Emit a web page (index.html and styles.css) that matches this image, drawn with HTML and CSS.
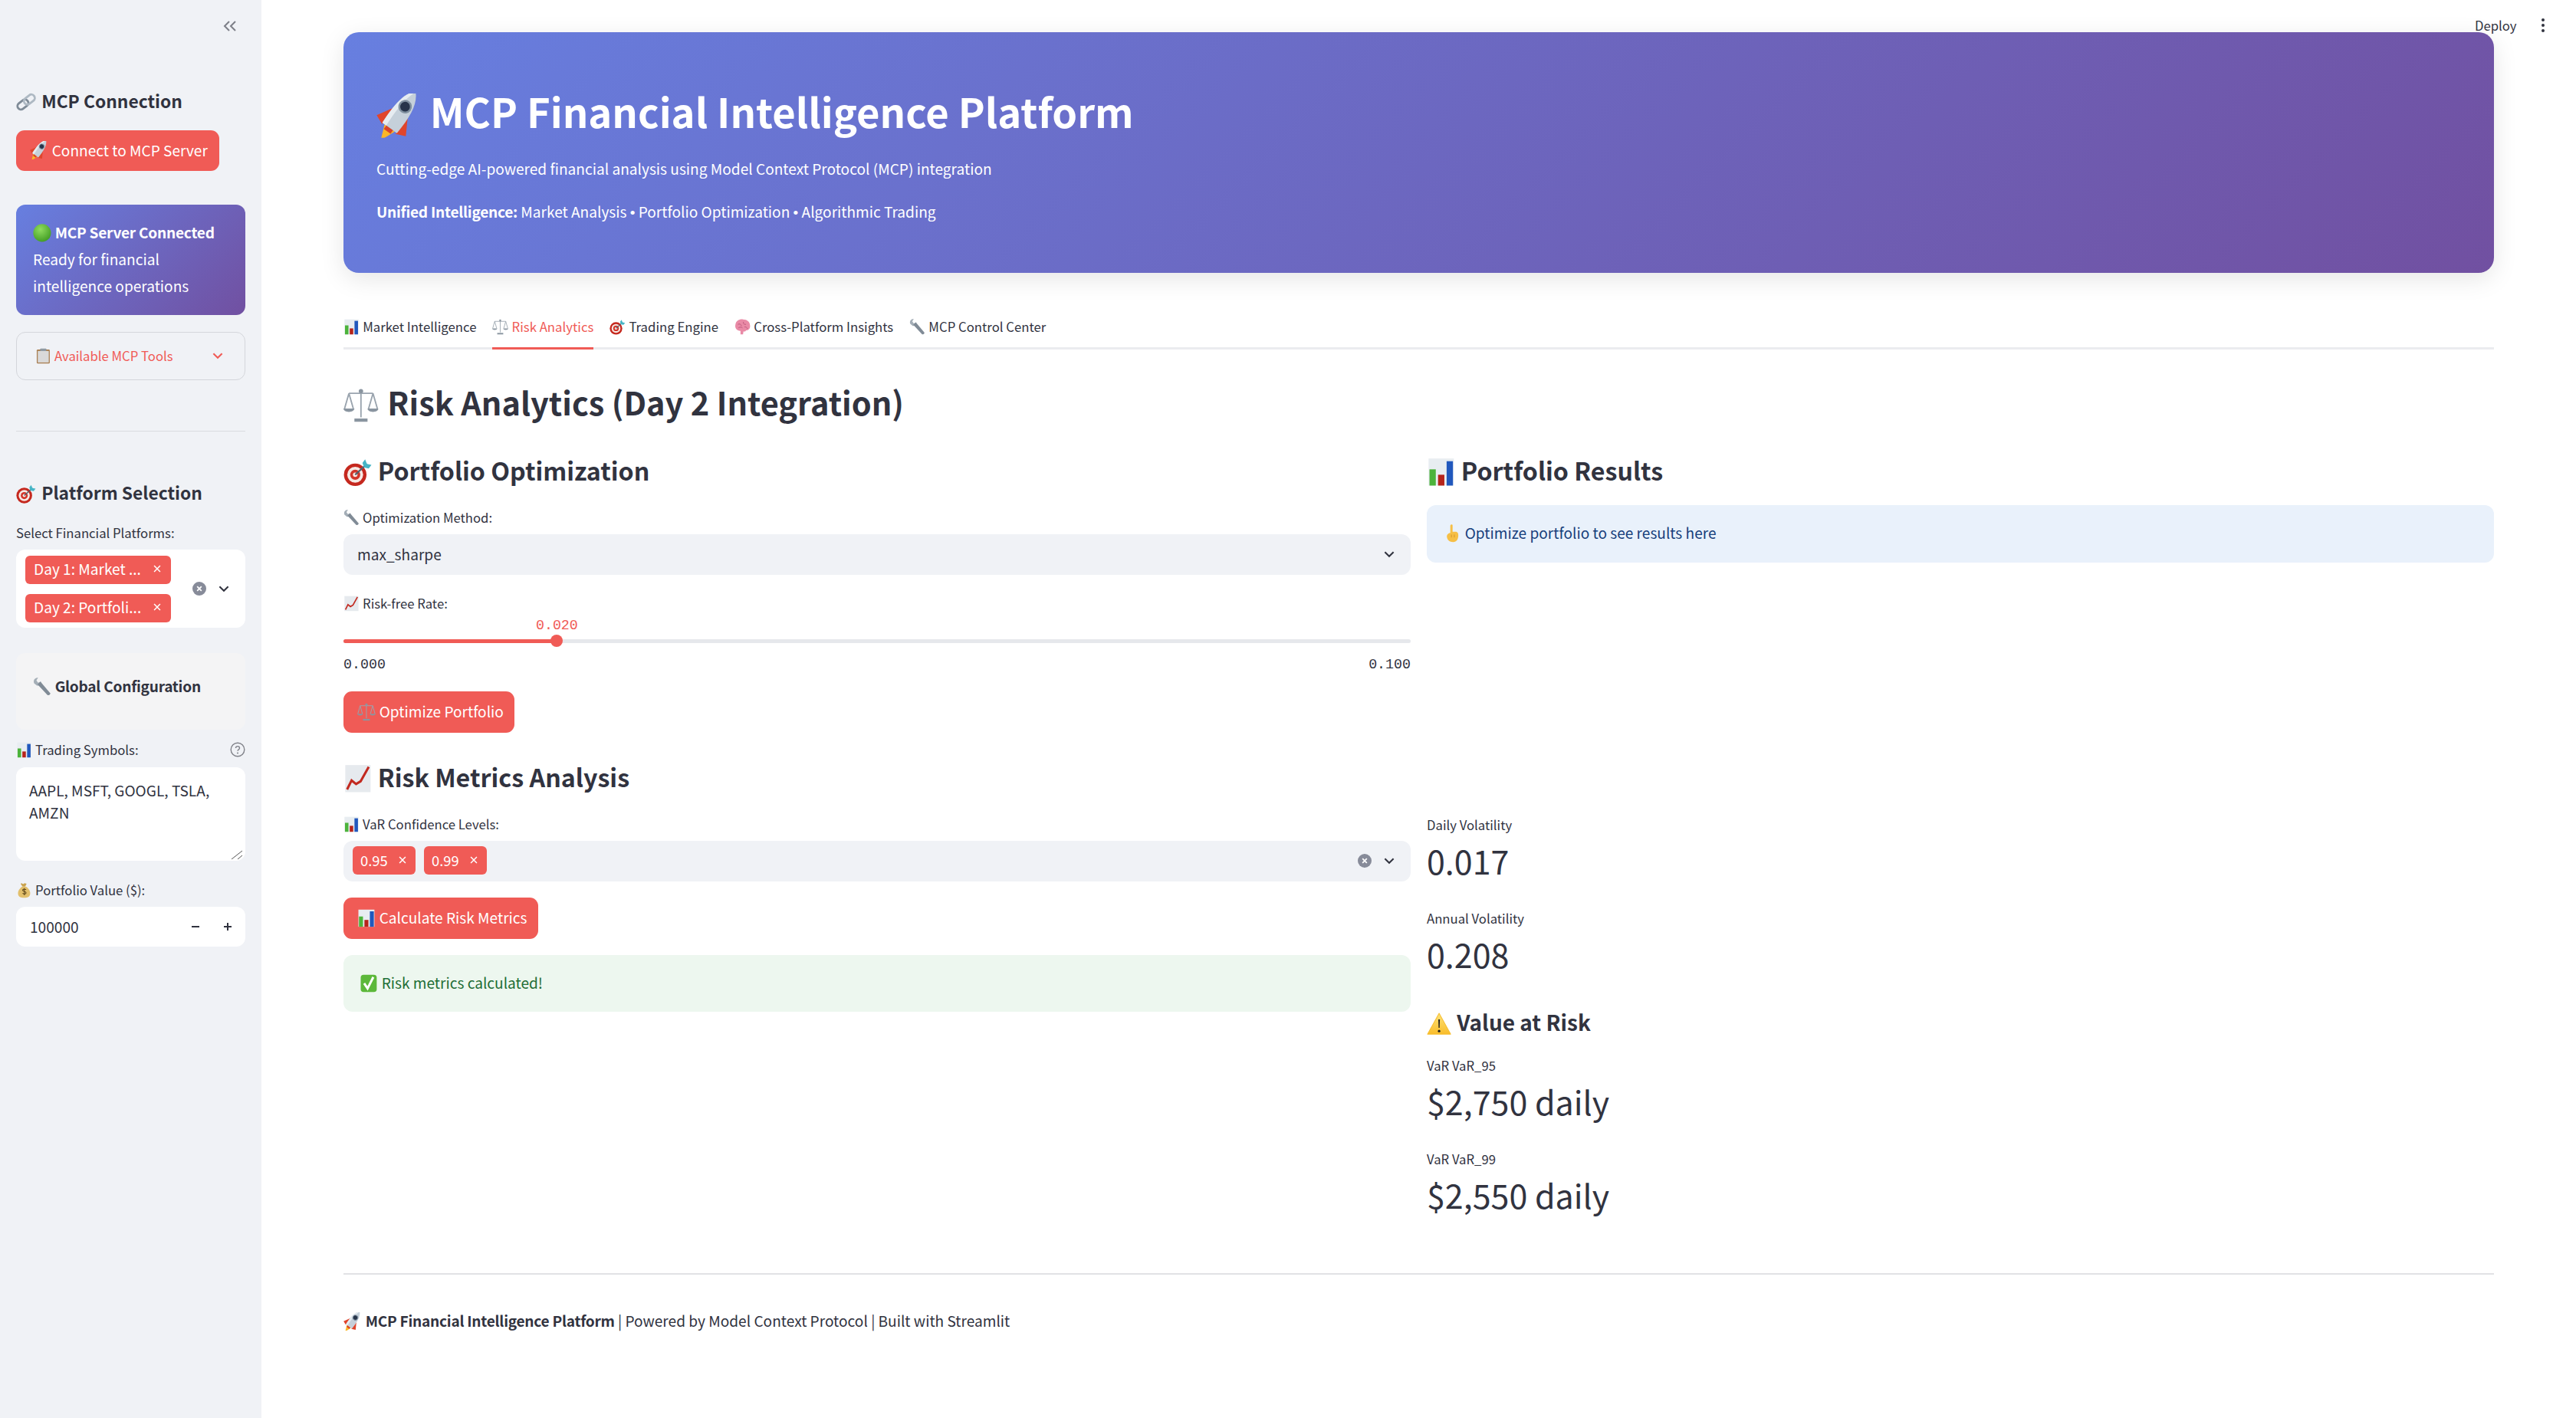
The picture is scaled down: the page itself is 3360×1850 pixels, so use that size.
FILE: index.html

```html
<!DOCTYPE html>
<html lang="en">
<head>
  <meta charset="UTF-8">
  <title>MCP Financial Intelligence Platform</title>
  <link rel="stylesheet" href="styles.css">
</head>
<body>
  <svg class="defs" aria-hidden="true">
    <defs>
      <radialGradient id="g-green" cx="40%" cy="30%" r="75%"><stop offset="0" stop-color="#8fdc5e"/><stop offset="1" stop-color="#3f9a22"/></radialGradient>
      <linearGradient id="g-warn" x1="0" y1="0" x2="0" y2="1"><stop offset="0" stop-color="#fde37a"/><stop offset="1" stop-color="#f9bd2b"/></linearGradient>
    </defs>
    <symbol id="e-rocket" viewBox="0 0 32 32">
      <g transform="rotate(36 16 16)">
        <path d="M11.500 27h9L16 38z" fill="#fbb728"/>
        <path d="M10 13L3 25l7 3zM22 13l7 12-7 3z" fill="#e0452c"/>
        <path d="M16-5c6 6 7.500 16 6.500 32h-13C8.500 11 10-1 16-5z" fill="#c5d0da"/>
        <path d="M16-5c-6 4-7.500 16-6.500 32H13C12 12 13 2 16-5z" fill="#e6ecf1"/>
        <circle cx="16" cy="8" r="4.200" fill="#27344a" stroke="#7f8f9f" stroke-width="1.400"/>
        <path d="M13 27h6v3h-6z" fill="#d8442b"/>
      </g>
    </symbol>
    <symbol id="e-link" viewBox="0 0 32 32">
      <g fill="none" stroke="#7f8b97" stroke-width="3.500" transform="rotate(-38 16 16)">
        <rect x="0" y="10.500" width="19" height="11" rx="5.500"/>
        <rect x="13" y="10.500" width="19" height="11" rx="5.500" stroke="#aeb9c3"/>
      </g>
    </symbol>
    <symbol id="e-green" viewBox="0 0 32 32"><circle cx="16" cy="16" r="15.500" fill="url(#g-green)"/></symbol>
    <symbol id="e-clip" viewBox="0 0 32 32">
      <rect x="3" y="3" width="26" height="28" rx="2" fill="#a97f52"/>
      <rect x="5" y="6" width="22" height="23" fill="#d9d9d9"/>
      <rect x="10" y="1" width="12" height="5" rx="1" fill="#8f9aa3"/>
    </symbol>
    <symbol id="e-target" viewBox="0 0 32 32">
      <circle cx="13" cy="19" r="12.500" fill="#c5281e"/>
      <circle cx="13" cy="19" r="8.800" fill="#f6e9e4"/>
      <circle cx="13" cy="19" r="5.600" fill="#d2352a"/>
      <circle cx="13" cy="19" r="2.500" fill="#f6e9e4"/>
      <path d="M13 19L26 7" stroke="#55626d" stroke-width="1.800"/>
      <path d="M24 2l2 5 5 1-3 4-5-1-2-5z" fill="#46b5c6"/>
    </symbol>
    <symbol id="e-wrench" viewBox="0 0 32 32">
      <path d="M2 10C0 5 3 0 9 0L6 5l3 4 5-2c1 5-3 8-7 7z" fill="#a4aeb7"/>
      <path d="M8 12l5-5 17 20c1 3-3 5-5 3z" fill="#808b96"/>
    </symbol>
    <symbol id="e-bars" viewBox="0 0 32 32">
      <rect x="2" y="1" width="28" height="30" fill="#e8edf1"/>
      <rect x="3" y="13" width="7" height="18" fill="#4cb33b"/>
      <rect x="12.500" y="19" width="7" height="12" fill="#b6241b"/>
      <rect x="22" y="4" width="7" height="27" fill="#2158bd"/>
    </symbol>
    <symbol id="e-chart" viewBox="0 0 32 32">
      <rect x="2" y="1" width="28" height="30" fill="#e6eaee"/>
      <path d="M4 28l5-10 5 4 5-3 9-16" fill="none" stroke="#c22a20" stroke-width="2.600"/>
    </symbol>
    <symbol id="e-scales" viewBox="0 0 32 32">
      <g fill="none" stroke="#9aa4ae" stroke-width="1.300">
        <path d="M16 2v25M5 5h22M5 5l-4 14M5 5l4 14M27 5l-4 14M27 5l4 14"/>
      </g>
      <path d="M0 19h10c0 4-10 4-10 0zM22 19h10c0 4-10 4-10 0z" fill="#8a95a0"/>
      <path d="M10 28h12v3H10z" fill="#8a95a0"/>
      <circle cx="16" cy="3" r="2" fill="#8a95a0"/>
    </symbol>
    <symbol id="e-brain" viewBox="0 0 32 32">
      <path d="M2 11C3 4 10 0 17 1c8 0 14 5 14 12 1 5-2 10-8 10-1 2-3 3-5 2l-1 6h-5v-7C5 24 0 18 2 11z" fill="#e98aa6"/>
      <path d="M7 11c3-2 6 0 7 3M18 6c-1 3 1 6 5 5M8 18c3-2 6-2 8 0M20 16c3 0 5 1 6 4" fill="none" stroke="#b9557a" stroke-width="1.400"/>
    </symbol>
    <symbol id="e-check" viewBox="0 0 32 32">
      <rect x="2" y="1" width="28" height="30" rx="5" fill="#5cb83a"/>
      <path d="M8 16l6 9L24 5" fill="none" stroke="#fff" stroke-width="4"/>
    </symbol>
    <symbol id="e-point" viewBox="0 0 32 32">
      <path d="M13 2c1-2 4-2 4 0v11h5c4 0 5 3 5 6 0 7-3 12-9 12s-10-3-11-9c0-3 1-6 6-7z" fill="#f6bf45"/>
      <path d="M15 18v5M20 18v5" stroke="#d2922a" stroke-width="1.200"/>
    </symbol>
    <symbol id="e-warn" viewBox="0 0 32 32">
      <path d="M16 2L31 29H1z" fill="url(#g-warn)" stroke="#f7bd2e" stroke-linejoin="round"/>
      <path d="M15 10h2l-.4 11h-1.200z" fill="#1c1c1c"/>
      <circle cx="16" cy="25" r="1.600" fill="#1c1c1c"/>
    </symbol>
    <symbol id="e-bag" viewBox="0 0 32 32">
      <path d="M11 2l3 2 3-2 4 1-3 6h-5l-4-6z" fill="#c9a24d"/>
      <path d="M12 9h8c6 4 9 10 8 15-1 5-5 7-12 7S5 29 4 24c-1-5 2-11 8-15z" fill="#e2bf6b"/>
      <path d="M20 15c-3-2-7-1-7 1s7 2 7 5-5 3-7 1M16.500 12v14" fill="none" stroke="#5c4418" stroke-width="1.600"/>
    </symbol>
    <symbol id="i-chev" viewBox="0 0 16 16"><path d="M3 5.500l5 5 5-5" fill="none" stroke="currentColor" stroke-width="1.800"/></symbol>
    <symbol id="i-x" viewBox="0 0 16 16"><path d="M3.500 3.500l9 9M12.500 3.500l-9 9" fill="none" stroke="currentColor" stroke-width="1.700"/></symbol>
    <symbol id="i-clear" viewBox="0 0 16 16"><circle cx="8" cy="8" r="8" fill="#878b99"/><path d="M5.500 5.500l5 5M10.500 5.500l-5 5" stroke="#fff" stroke-width="1.600"/></symbol>
  </svg>

  <div class="top-actions">
    <span>Deploy</span>
    <span class="dots"><i></i><i></i><i></i></span>
  </div>

  <div class="app">
    <aside class="sidebar">
      <div class="collapse">
        <svg viewBox="0 0 18 14" class="collapse-icon"><path d="M8 1L2 7l6 6M16 1l-6 6 6 6" fill="none" stroke="currentColor" stroke-width="2"/></svg>
      </div>

      <h3 class="side-head first"><svg class="emoji"><use href="#e-link"/></svg>MCP Connection</h3>
      <button class="btn connect"><svg class="emoji"><use href="#e-rocket"/></svg>Connect to MCP Server</button>

      <div class="status-card">
        <div><svg class="emoji"><use href="#e-green"/></svg><b>MCP Server Connected</b></div>
        <div>Ready for financial</div>
        <div>intelligence operations</div>
      </div>

      <div class="expander">
        <span><svg class="emoji"><use href="#e-clip"/></svg>Available MCP Tools</span>
        <svg class="chev"><use href="#i-chev"/></svg>
      </div>

      <hr class="side-rule">

      <h3 class="side-head second"><svg class="emoji"><use href="#e-target"/></svg>Platform Selection</h3>
      <label class="field-label select-label">Select Financial Platforms:</label>
      <div class="side-multi">
        <div class="side-tags">
          <span class="tag wide"><span>Day 1: Market ...</span><svg class="tag-x"><use href="#i-x"/></svg></span>
          <span class="tag wide"><span>Day 2: Portfoli...</span><svg class="tag-x"><use href="#i-x"/></svg></span>
        </div>
        <svg class="clear"><use href="#i-clear"/></svg>
        <svg class="chev dark"><use href="#i-chev"/></svg>
      </div>

      <div class="config-box"><svg class="emoji"><use href="#e-wrench"/></svg><b>Global Configuration</b></div>

      <label class="field-label symbols-label">
        <span><svg class="emoji"><use href="#e-bars"/></svg>Trading Symbols:</span>
        <svg class="help" viewBox="0 0 20 20"><circle cx="10" cy="10" r="8.800" fill="none" stroke="currentColor" stroke-width="1.400"/><path d="M7.500 8c0-3.200 5-3.200 5 0 0 2-2.500 1.800-2.500 3.800" fill="none" stroke="currentColor" stroke-width="1.400"/><circle cx="10" cy="14.500" r="1" fill="currentColor"/></svg>
      </label>
      <div class="textarea">AAPL, MSFT, GOOGL, TSLA, AMZN
        <svg class="grip" viewBox="0 0 16 12"><path d="M1 12L15 1M9 12l6-5" stroke="#555" fill="none"/></svg>
      </div>

      <label class="field-label value-label"><svg class="emoji"><use href="#e-bag"/></svg>Portfolio Value ($):</label>
      <div class="number-input">
        <span class="number-text">100000</span>
        <span class="step minus"></span>
        <span class="step plus"></span>
      </div>
    </aside>

    <main class="main">
      <section class="hero">
        <h1><svg class="emoji"><use href="#e-rocket"/></svg>MCP Financial Intelligence Platform</h1>
        <p class="hero-sub">Cutting-edge AI-powered financial analysis using Model Context Protocol (MCP) integration</p>
        <p class="hero-line"><b>Unified Intelligence:</b> Market Analysis <span class="sep">•</span> Portfolio Optimization <span class="sep">•</span> Algorithmic Trading</p>
      </section>

      <nav class="tabs">
        <span class="tab"><svg class="emoji"><use href="#e-bars"/></svg>Market Intelligence</span>
        <span class="tab active"><svg class="emoji"><use href="#e-scales"/></svg>Risk Analytics</span>
        <span class="tab"><svg class="emoji"><use href="#e-target"/></svg>Trading Engine</span>
        <span class="tab"><svg class="emoji"><use href="#e-brain"/></svg>Cross-Platform Insights</span>
        <span class="tab"><svg class="emoji"><use href="#e-wrench"/></svg>MCP Control Center</span>
      </nav>

      <h2 class="page-title"><svg class="emoji"><use href="#e-scales"/></svg>Risk Analytics (Day 2 Integration)</h2>

      <div class="columns">
        <div class="col">
          <h3 class="section-title"><svg class="emoji"><use href="#e-target"/></svg>Portfolio Optimization</h3>
          <label class="field-label main-label"><svg class="emoji"><use href="#e-wrench"/></svg>Optimization Method:</label>
          <div class="select">
            <span>max_sharpe</span>
            <svg class="chev dark"><use href="#i-chev"/></svg>
          </div>

          <label class="field-label rate-label"><svg class="emoji"><use href="#e-chart"/></svg>Risk-free Rate:</label>
          <div class="slider">
            <div class="slider-value"><span style="left: 20%">0.020</span></div>
            <div class="track">
              <div class="fill" style="width: 20%"></div>
              <div class="thumb" style="left: 20%"></div>
            </div>
            <div class="ticks"><span>0.000</span><span>0.100</span></div>
          </div>
          <button class="btn optimize"><svg class="emoji"><use href="#e-scales"/></svg>Optimize Portfolio</button>

          <h3 class="section-title metrics-title"><svg class="emoji"><use href="#e-chart"/></svg>Risk Metrics Analysis</h3>
          <label class="field-label main-label"><svg class="emoji"><use href="#e-bars"/></svg>VaR Confidence Levels:</label>
          <div class="select multi">
            <div class="tag-row">
              <span class="tag"><span>0.95</span><svg class="tag-x"><use href="#i-x"/></svg></span>
              <span class="tag"><span>0.99</span><svg class="tag-x"><use href="#i-x"/></svg></span>
            </div>
            <svg class="clear"><use href="#i-clear"/></svg>
            <svg class="chev dark"><use href="#i-chev"/></svg>
          </div>
          <button class="btn calculate"><svg class="emoji"><use href="#e-bars"/></svg>Calculate Risk Metrics</button>
          <div class="alert success"><svg class="emoji"><use href="#e-check"/></svg>Risk metrics calculated!</div>
        </div>

        <div class="col">
          <h3 class="section-title"><svg class="emoji"><use href="#e-bars"/></svg>Portfolio Results</h3>
          <div class="alert info"><svg class="emoji"><use href="#e-point"/></svg>Optimize portfolio to see results here</div>

          <div class="metric first-metric">
            <div class="metric-label">Daily Volatility</div>
            <div class="metric-value">0.017</div>
          </div>
          <div class="metric">
            <div class="metric-label">Annual Volatility</div>
            <div class="metric-value">0.208</div>
          </div>

          <h4 class="sub-title"><svg class="emoji"><use href="#e-warn"/></svg>Value at Risk</h4>
          <div class="metric var-metric">
            <div class="metric-label">VaR VaR_95</div>
            <div class="metric-value">$2,750 daily</div>
          </div>
          <div class="metric">
            <div class="metric-label">VaR VaR_99</div>
            <div class="metric-value">$2,550 daily</div>
          </div>
        </div>
      </div>

      <hr class="foot-rule">
      <p class="footer"><svg class="emoji"><use href="#e-rocket"/></svg><b>MCP Financial Intelligence Platform</b> | Powered by Model Context Protocol | Built with Streamlit</p>
    </main>
  </div>
</body>
</html>
```

FILE: styles.css

```css
* {
  box-sizing: border-box;
}
html, body {
  margin: 0;
  height: 100%;
}
body {
  font-family: "Noto Sans CJK SC", "Noto Sans", sans-serif;
  color: #31333f;
  background: #fff;
  overflow: hidden;
}
.defs {
  position: absolute;
  width: 0;
  height: 0;
}
b {
  font-weight: 700;
  letter-spacing: -0.013em;
}
h1, h2, h3, h4 {
  font-weight: 700;
}
h1, h2, h3, h4, p {
  margin: 0;
}
.emoji {
  width: 1.25em;
  height: 1.25em;
  vertical-align: 0.16em;
  margin: -0.4em 0.25em -0.4em 0;
  overflow: visible;
}
.app {
  display: flex;
  height: 1850px;
}

/* top right */
.top-actions {
  position: absolute;
  top: 20px;
  left: 3228px;
  z-index: 5;
  display: flex;
  align-items: center;
  gap: 32px;
  font-size: 16.7px;
  line-height: 26px;
}
.dots {
  display: flex;
  flex-direction: column;
  gap: 3px;
}
.dots i {
  width: 4px;
  height: 4px;
  border-radius: 50%;
  background: #31333f;
}

/* sidebar */
.sidebar {
  width: 341px;
  flex: none;
  background: #f0f2f6;
  padding: 27px 21px 0;
}
.collapse {
  display: flex;
  justify-content: flex-end;
  padding-right: 11px;
  height: 14px;
  color: #7d7f88;
}
.collapse-icon {
  width: 18px;
  height: 14px;
}
.side-head {
  font-size: 22.8px;
  line-height: 36px;
  white-space: nowrap;
}
.side-head .emoji {
  width: 1.15em;
  height: 1.15em;
  margin-right: 7px;
}
.side-head.first {
  margin-top: 73px;
}
.side-head.second {
  margin-top: 62px;
}
.btn {
  display: block;
  border: none;
  background: #f05b56;
  color: #fff;
  font-family: inherit;
  font-size: 19.1px;
  line-height: 30px;
  border-radius: 11px;
  white-space: nowrap;
  padding: 0 18px 2px;
  height: 54px;
  text-align: left;
}
.connect {
  margin-top: 20px;
  width: 265px;
  height: 53px;
}
.status-card {
  margin-top: 44px;
  height: 144px;
  border-radius: 12px;
  padding: 19px 10px 0 22px;
  color: #fff;
  font-size: 19.1px;
  line-height: 35px;
  background: linear-gradient(135deg, #677fe0, #7150a1);
}
.expander {
  margin-top: 22px;
  height: 63px;
  border: 1px solid #d4d6db;
  border-radius: 12px;
  display: flex;
  align-items: center;
  justify-content: space-between;
  padding: 0 26px 2px 24px;
  color: #f05b56;
  font-size: 16.7px;
}
.chev {
  width: 18px;
  height: 18px;
  flex: none;
}
.chev.dark {
  color: #31333f;
}
.side-rule {
  margin: 66px 0 0;
  border: none;
  border-top: 1px solid #d9dbe0;
}
.field-label {
  display: block;
  font-size: 16.7px;
  line-height: 24px;
}
.select-label {
  margin-top: 22px;
}
.side-multi {
  margin-top: 10px;
  height: 102px;
  background: #fff;
  border-radius: 12px;
  display: flex;
  align-items: center;
  padding: 0 19px 0 12px;
}
.side-tags {
  display: flex;
  flex-direction: column;
  gap: 13px;
  flex: 1;
}
.tag {
  display: inline-flex;
  align-items: center;
  justify-content: space-between;
  height: 37px;
  background: #f05b56;
  color: #fff;
  border-radius: 6px;
  padding: 0 10px 2px;
  font-size: 18.4px;
  white-space: nowrap;
}
.tag.wide {
  width: 190px;
  padding: 0 11px 2px;
  font-size: 19.1px;
}
.tag-x {
  width: 14px;
  height: 14px;
  margin-left: 8px;
}
.clear {
  width: 18px;
  height: 18px;
  flex: none;
  margin-right: 14px;
}
.config-box {
  margin-top: 33px;
  height: 100px;
  border-radius: 12px;
  background: #f4f4f5;
  padding: 28px 10px 0 22px;
  font-size: 19.1px;
  line-height: 30px;
}
.symbols-label {
  margin-top: 14px;
  display: flex;
  justify-content: space-between;
  align-items: center;
}
.help {
  width: 20px;
  height: 20px;
  color: #808289;
}
.textarea {
  position: relative;
  margin-top: 11px;
  height: 122px;
  border-radius: 12px;
  background: #fff;
  padding: 16px 17px;
  font-size: 19.1px;
  line-height: 29px;
}
.grip {
  position: absolute;
  right: 3px;
  bottom: 2px;
  width: 16px;
  height: 12px;
}
.value-label {
  margin-top: 26px;
}
.number-input {
  margin-top: 10px;
  height: 52px;
  border-radius: 12px;
  background: #fff;
  display: flex;
  align-items: center;
  padding: 0 17px 1px 18px;
  font-size: 19.1px;
}
.number-text {
  flex: 1;
}
.step {
  width: 12px;
  height: 12px;
  position: relative;
  margin-left: 30px;
}
.step::before, .plus::after {
  content: "";
  position: absolute;
  background: #31333f;
}
.step::before {
  left: 1px;
  right: 1px;
  top: 5px;
  height: 2px;
}
.plus::after {
  top: 1px;
  bottom: 1px;
  left: 5px;
  width: 2px;
}

/* main */
.main {
  flex: 1;
  min-width: 0;
  padding: 42px 107px 0;
}
.hero {
  height: 314px;
  border-radius: 20px;
  padding: 67px 43px 0;
  color: #fff;
  background: linear-gradient(135deg, #677fe0 0%, #7150a1 100%);
  box-shadow: 0 8px 32px rgba(0, 0, 0, 0.1);
}
.hero h1 {
  font-size: 52.5px;
  line-height: 70px;
  white-space: nowrap;
}
.hero h1 .emoji {
  width: 1.1em;
  height: 1.1em;
  margin-right: 0.23em;
}
.hero-sub {
  margin-top: 26px;
  font-size: 19.1px;
  line-height: 30px;
}
.hero-line {
  margin-top: 26px;
  font-size: 19.1px;
  line-height: 30px;
}
.sep {
  font-family: "Liberation Sans", sans-serif;
}
.tabs {
  margin-top: 51px;
  display: flex;
  gap: 21px;
  border-bottom: 3px solid #ebecef;
}
.tab {
  font-size: 16.75px;
  line-height: 38px;
  padding-bottom: 8px;
  margin-bottom: -3px;
  border-bottom: 3px solid transparent;
  white-space: nowrap;
}
.tab.active {
  color: #f05b56;
  border-bottom-color: #f05b56;
}
.page-title {
  margin-top: 40px;
  font-size: 41.5px;
  line-height: 56px;
}
.page-title .emoji {
  width: 1.1em;
  height: 1.1em;
  margin-right: 0.28em;
}
.columns {
  margin-top: 43px;
  display: grid;
  grid-template-columns: 1fr 1fr;
  gap: 21px;
}
.col {
  min-width: 0;
}
.section-title {
  font-size: 32.2px;
  line-height: 36px;
}
.section-title .emoji {
  width: 1.17em;
  height: 1.17em;
  margin-right: 0.22em;
}
.main-label {
  margin-top: 32px;
}
.select {
  margin-top: 10px;
  height: 53px;
  border-radius: 12px;
  background: #f0f2f6;
  display: flex;
  align-items: center;
  justify-content: space-between;
  padding: 0 19px 2px 18px;
  font-size: 19.1px;
}
.rate-label {
  margin-top: 25px;
}
.slider {
  margin-top: 3px;
}
.slider-value {
  position: relative;
  height: 24px;
}
.slider-value span {
  position: absolute;
  top: 2px;
  transform: translateX(-50%);
  color: #f05b56;
  font-family: "Liberation Mono", monospace;
  font-size: 18.3px;
  line-height: 24px;
}
.track {
  position: relative;
  margin-top: 8px;
  height: 5px;
  border-radius: 3px;
  background: #e6e8ec;
}
.fill {
  height: 100%;
  border-radius: 3px;
  background: #f05b56;
}
.thumb {
  position: absolute;
  top: -6px;
  width: 16px;
  height: 16px;
  margin-left: -8px;
  border-radius: 50%;
  background: #f05b56;
}
.ticks {
  margin-top: 16px;
  display: flex;
  justify-content: space-between;
  font-family: "Liberation Mono", monospace;
  font-size: 18.3px;
  line-height: 24px;
}
.optimize {
  margin-top: 23px;
  width: 223px;
}
.metrics-title {
  margin-top: 39px;
}
.multi {
  padding-left: 12px;
}
.tag-row {
  display: flex;
  gap: 11px;
  flex: 1;
}
.tag-row .tag {
  width: 82px;
}
.calculate {
  margin-top: 21px;
  width: 254px;
}
.alert {
  border-radius: 12px;
  font-size: 19.1px;
  line-height: 30px;
  padding: 21px 21px 0;
}
.success {
  margin-top: 21px;
  height: 74px;
  background: #edf7ef;
  color: #1f6e36;
}
.info {
  margin-top: 28px;
  height: 75px;
  background: #e9f1fb;
  color: #173f7c;
}
.metric-label {
  font-size: 16.7px;
  line-height: 24px;
}
.metric-value {
  margin-top: 7px;
  padding-bottom: 2px;
  font-size: 43px;
  line-height: 54px;
}
.metric {
  margin-top: 35px;
}
.first-metric {
  margin-top: 330px;
}
.sub-title {
  margin-top: 42px;
  font-size: 28px;
  line-height: 36px;
}
.sub-title .emoji {
  width: 1.15em;
  height: 1.15em;
}
.var-metric {
  margin-top: 27px;
}
.foot-rule {
  margin: 74px 0 0;
  border: none;
  border-top: 2px solid #e1e2e5;
}
.footer {
  margin-top: 45px;
  font-size: 19.1px;
  line-height: 30px;
}
```
